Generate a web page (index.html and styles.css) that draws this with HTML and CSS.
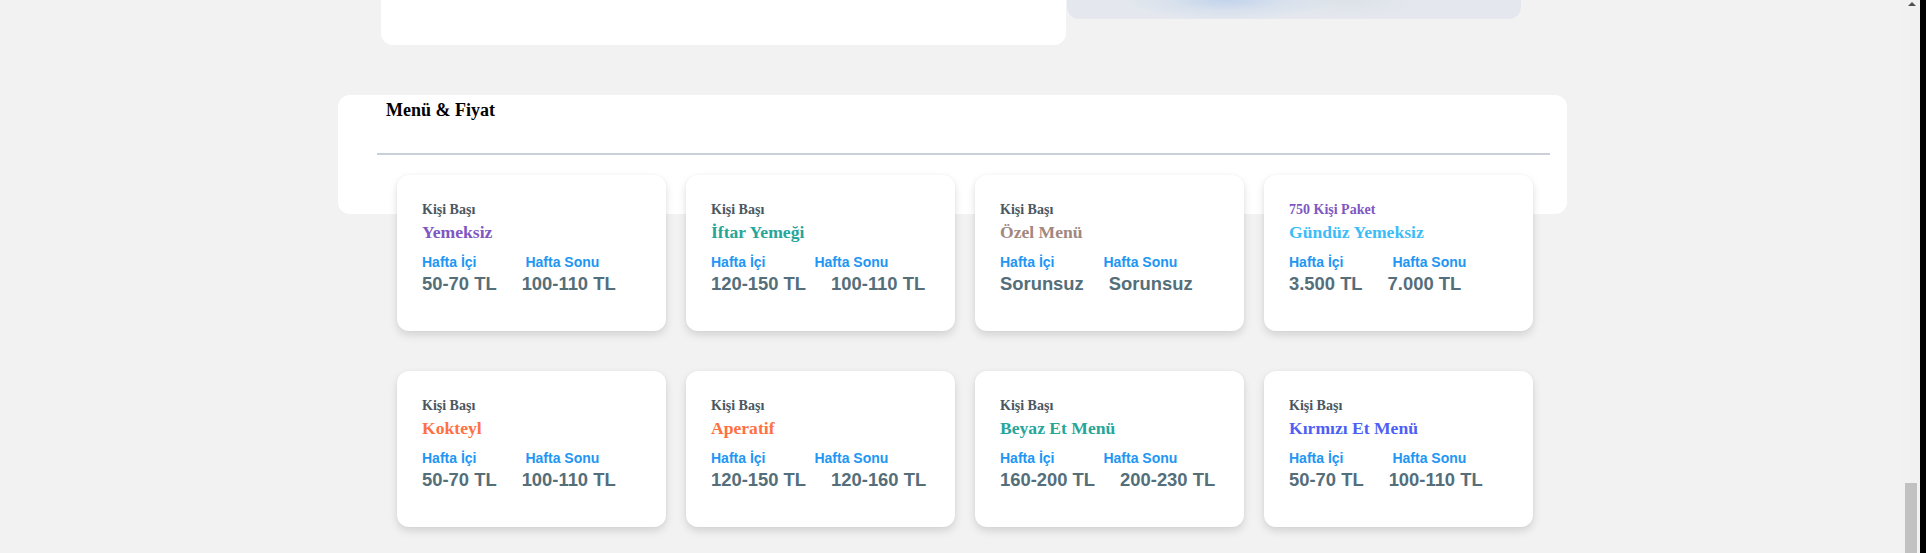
FILE: index.html
```html
<!DOCTYPE html>
<html lang="tr">
<head>
<meta charset="utf-8">
<title>Menü &amp; Fiyat</title>
<link rel="stylesheet" href="styles.css">
</head>
<body>
<div class="page">
  <main class="main">
    <div class="top-row">
      <div class="top-card"></div>
      <div class="top-media"></div>
    </div>

    <section class="menu-section">
      <h3 class="menu-title">Menü &amp; Fiyat</h3>
      <hr class="menu-rule">
      <div class="menu-grid">
        <div class="price-card">
          <div class="pc-sub">Kişi Başı</div>
          <div class="pc-title c-purple">Yemeksiz</div>
          <div class="pc-labels"><span class="pc-label">Hafta İçi</span><span class="pc-label">Hafta Sonu</span></div>
          <div class="pc-prices"><span class="pc-price">50-70 TL</span><span class="pc-price">100-110 TL</span></div>
        </div>
        <div class="price-card">
          <div class="pc-sub">Kişi Başı</div>
          <div class="pc-title c-teal">İftar Yemeği</div>
          <div class="pc-labels"><span class="pc-label">Hafta İçi</span><span class="pc-label">Hafta Sonu</span></div>
          <div class="pc-prices"><span class="pc-price">120-150 TL</span><span class="pc-price">100-110 TL</span></div>
        </div>
        <div class="price-card">
          <div class="pc-sub">Kişi Başı</div>
          <div class="pc-title c-brown">Özel Menü</div>
          <div class="pc-labels"><span class="pc-label">Hafta İçi</span><span class="pc-label">Hafta Sonu</span></div>
          <div class="pc-prices"><span class="pc-price">Sorunsuz</span><span class="pc-price">Sorunsuz</span></div>
        </div>
        <div class="price-card">
          <div class="pc-sub c-purple">750 Kişi Paket</div>
          <div class="pc-title c-sky">Gündüz Yemeksiz</div>
          <div class="pc-labels"><span class="pc-label">Hafta İçi</span><span class="pc-label">Hafta Sonu</span></div>
          <div class="pc-prices"><span class="pc-price">3.500 TL</span><span class="pc-price">7.000 TL</span></div>
        </div>

        <div class="price-card">
          <div class="pc-sub">Kişi Başı</div>
          <div class="pc-title c-orange">Kokteyl</div>
          <div class="pc-labels"><span class="pc-label">Hafta İçi</span><span class="pc-label">Hafta Sonu</span></div>
          <div class="pc-prices"><span class="pc-price">50-70 TL</span><span class="pc-price">100-110 TL</span></div>
        </div>
        <div class="price-card">
          <div class="pc-sub">Kişi Başı</div>
          <div class="pc-title c-orange">Aperatif</div>
          <div class="pc-labels"><span class="pc-label">Hafta İçi</span><span class="pc-label">Hafta Sonu</span></div>
          <div class="pc-prices"><span class="pc-price">120-150 TL</span><span class="pc-price">120-160 TL</span></div>
        </div>
        <div class="price-card">
          <div class="pc-sub">Kişi Başı</div>
          <div class="pc-title c-teal">Beyaz Et Menü</div>
          <div class="pc-labels"><span class="pc-label">Hafta İçi</span><span class="pc-label">Hafta Sonu</span></div>
          <div class="pc-prices"><span class="pc-price">160-200 TL</span><span class="pc-price">200-230 TL</span></div>
        </div>
        <div class="price-card">
          <div class="pc-sub">Kişi Başı</div>
          <div class="pc-title c-indigo">Kırmızı Et Menü</div>
          <div class="pc-labels"><span class="pc-label">Hafta İçi</span><span class="pc-label">Hafta Sonu</span></div>
          <div class="pc-prices"><span class="pc-price">50-70 TL</span><span class="pc-price">100-110 TL</span></div>
        </div>
      </div>
    </section>
  </main>

  <div class="scrollbar">
    <div class="sb-arrow"></div>
    <div class="sb-track"></div>
    <div class="sb-thumb"></div>
  </div>
  <div class="edge"></div>
</div>
</body>
</html>
```

FILE: styles.css
```css
html, body {
  margin: 0;
  padding: 0;
  height: 553px;
  overflow: hidden;
  background: #f2f2f2;
}

.page {
  display: flex;
  height: 553px;
}

.main {
  width: 1903px;
  flex: 0 0 1903px;
  background: #f2f2f2;
}

.top-row {
  display: flex;
  align-items: flex-start;
  gap: 1px;
  margin-left: 381px;
  width: 1140px;
}

.top-card {
  width: 685px;
  height: 45px;
  background: #ffffff;
  border-radius: 0 0 12px 12px;
}

.top-media {
  width: 454px;
  height: 19px;
  border-radius: 0 0 12px 12px;
  background:
    radial-gradient(ellipse 105px 20px at 160px 0px, rgba(190, 209, 236, 0.9), rgba(205, 218, 236, 0.5) 55%, rgba(228, 232, 238, 0) 100%),
    radial-gradient(ellipse 70px 18px at 280px 0px, rgba(218, 223, 231, 0.8), rgba(228, 232, 238, 0) 100%),
    #e4e8ee;
}

.menu-section {
  box-sizing: border-box;
  margin: 50px 0 0 338px;
  width: 1229px;
  height: 119px;
  background: #ffffff;
  border-radius: 12px;
  padding: 5px 17px 0 39px;
}

.menu-title {
  margin: 0 0 0 9px;
  font-family: "Liberation Serif", "Times New Roman", serif;
  font-weight: bold;
  font-size: 18px;
  line-height: 20px;
  color: #000000;
}

.menu-rule {
  margin: 33px 0 0 0;
  height: 0;
  border: 0;
  border-top: 2px solid #c9d0d7;
}

.menu-grid {
  display: grid;
  grid-template-columns: repeat(4, 269px);
  column-gap: 20px;
  row-gap: 40px;
  margin: 20px 0 0 20px;
}

.price-card {
  box-sizing: border-box;
  height: 156px;
  background: #ffffff;
  border-radius: 12px;
  padding: 27px 25px 0;
  box-shadow: 0 4px 9px rgba(0, 0, 0, 0.13), 0 0 3px rgba(0, 0, 0, 0.04);
}

.pc-sub {
  font-family: "Liberation Serif", "Times New Roman", serif;
  font-weight: bold;
  font-size: 14px;
  line-height: 16px;
  color: #4a5761;
}

.pc-title {
  margin-top: 4px;
  font-family: "Liberation Serif", "Times New Roman", serif;
  font-weight: bold;
  font-size: 17.6px;
  line-height: 20px;
}

.pc-labels {
  display: flex;
  gap: 49px;
  margin-top: 12px;
  font-family: "Liberation Sans", Arial, sans-serif;
  font-weight: bold;
  font-size: 14px;
  line-height: 16px;
  color: #2196f3;
}

.pc-prices {
  display: flex;
  gap: 25px;
  margin-top: 3px;
  font-family: "Liberation Sans", Arial, sans-serif;
  font-weight: bold;
  font-size: 18.4px;
  line-height: 21px;
  color: #546e7a;
}

.c-purple { color: #7e57c2; }
.c-teal { color: #26a69a; }
.c-brown { color: #a1887f; }
.c-sky { color: #3dbdf7; }
.c-orange { color: #ff7043; }
.c-indigo { color: #4f5ff5; }

.scrollbar {
  width: 17px;
  flex: 0 0 17px;
  display: flex;
  flex-direction: column;
  background: #f1f1f1;
}

.sb-arrow {
  align-self: center;
  margin-top: 2px;
  width: 0;
  height: 0;
  border-left: 4px solid transparent;
  border-right: 4px solid transparent;
  border-bottom: 4px solid #505050;
}

.sb-track {
  flex: 1;
}

.sb-thumb {
  margin: 0 3px 0 2px;
  height: 70px;
  background: #c1c1c1;
}

.edge {
  width: 6px;
  flex: 0 0 6px;
  background: #000000;
}
```
